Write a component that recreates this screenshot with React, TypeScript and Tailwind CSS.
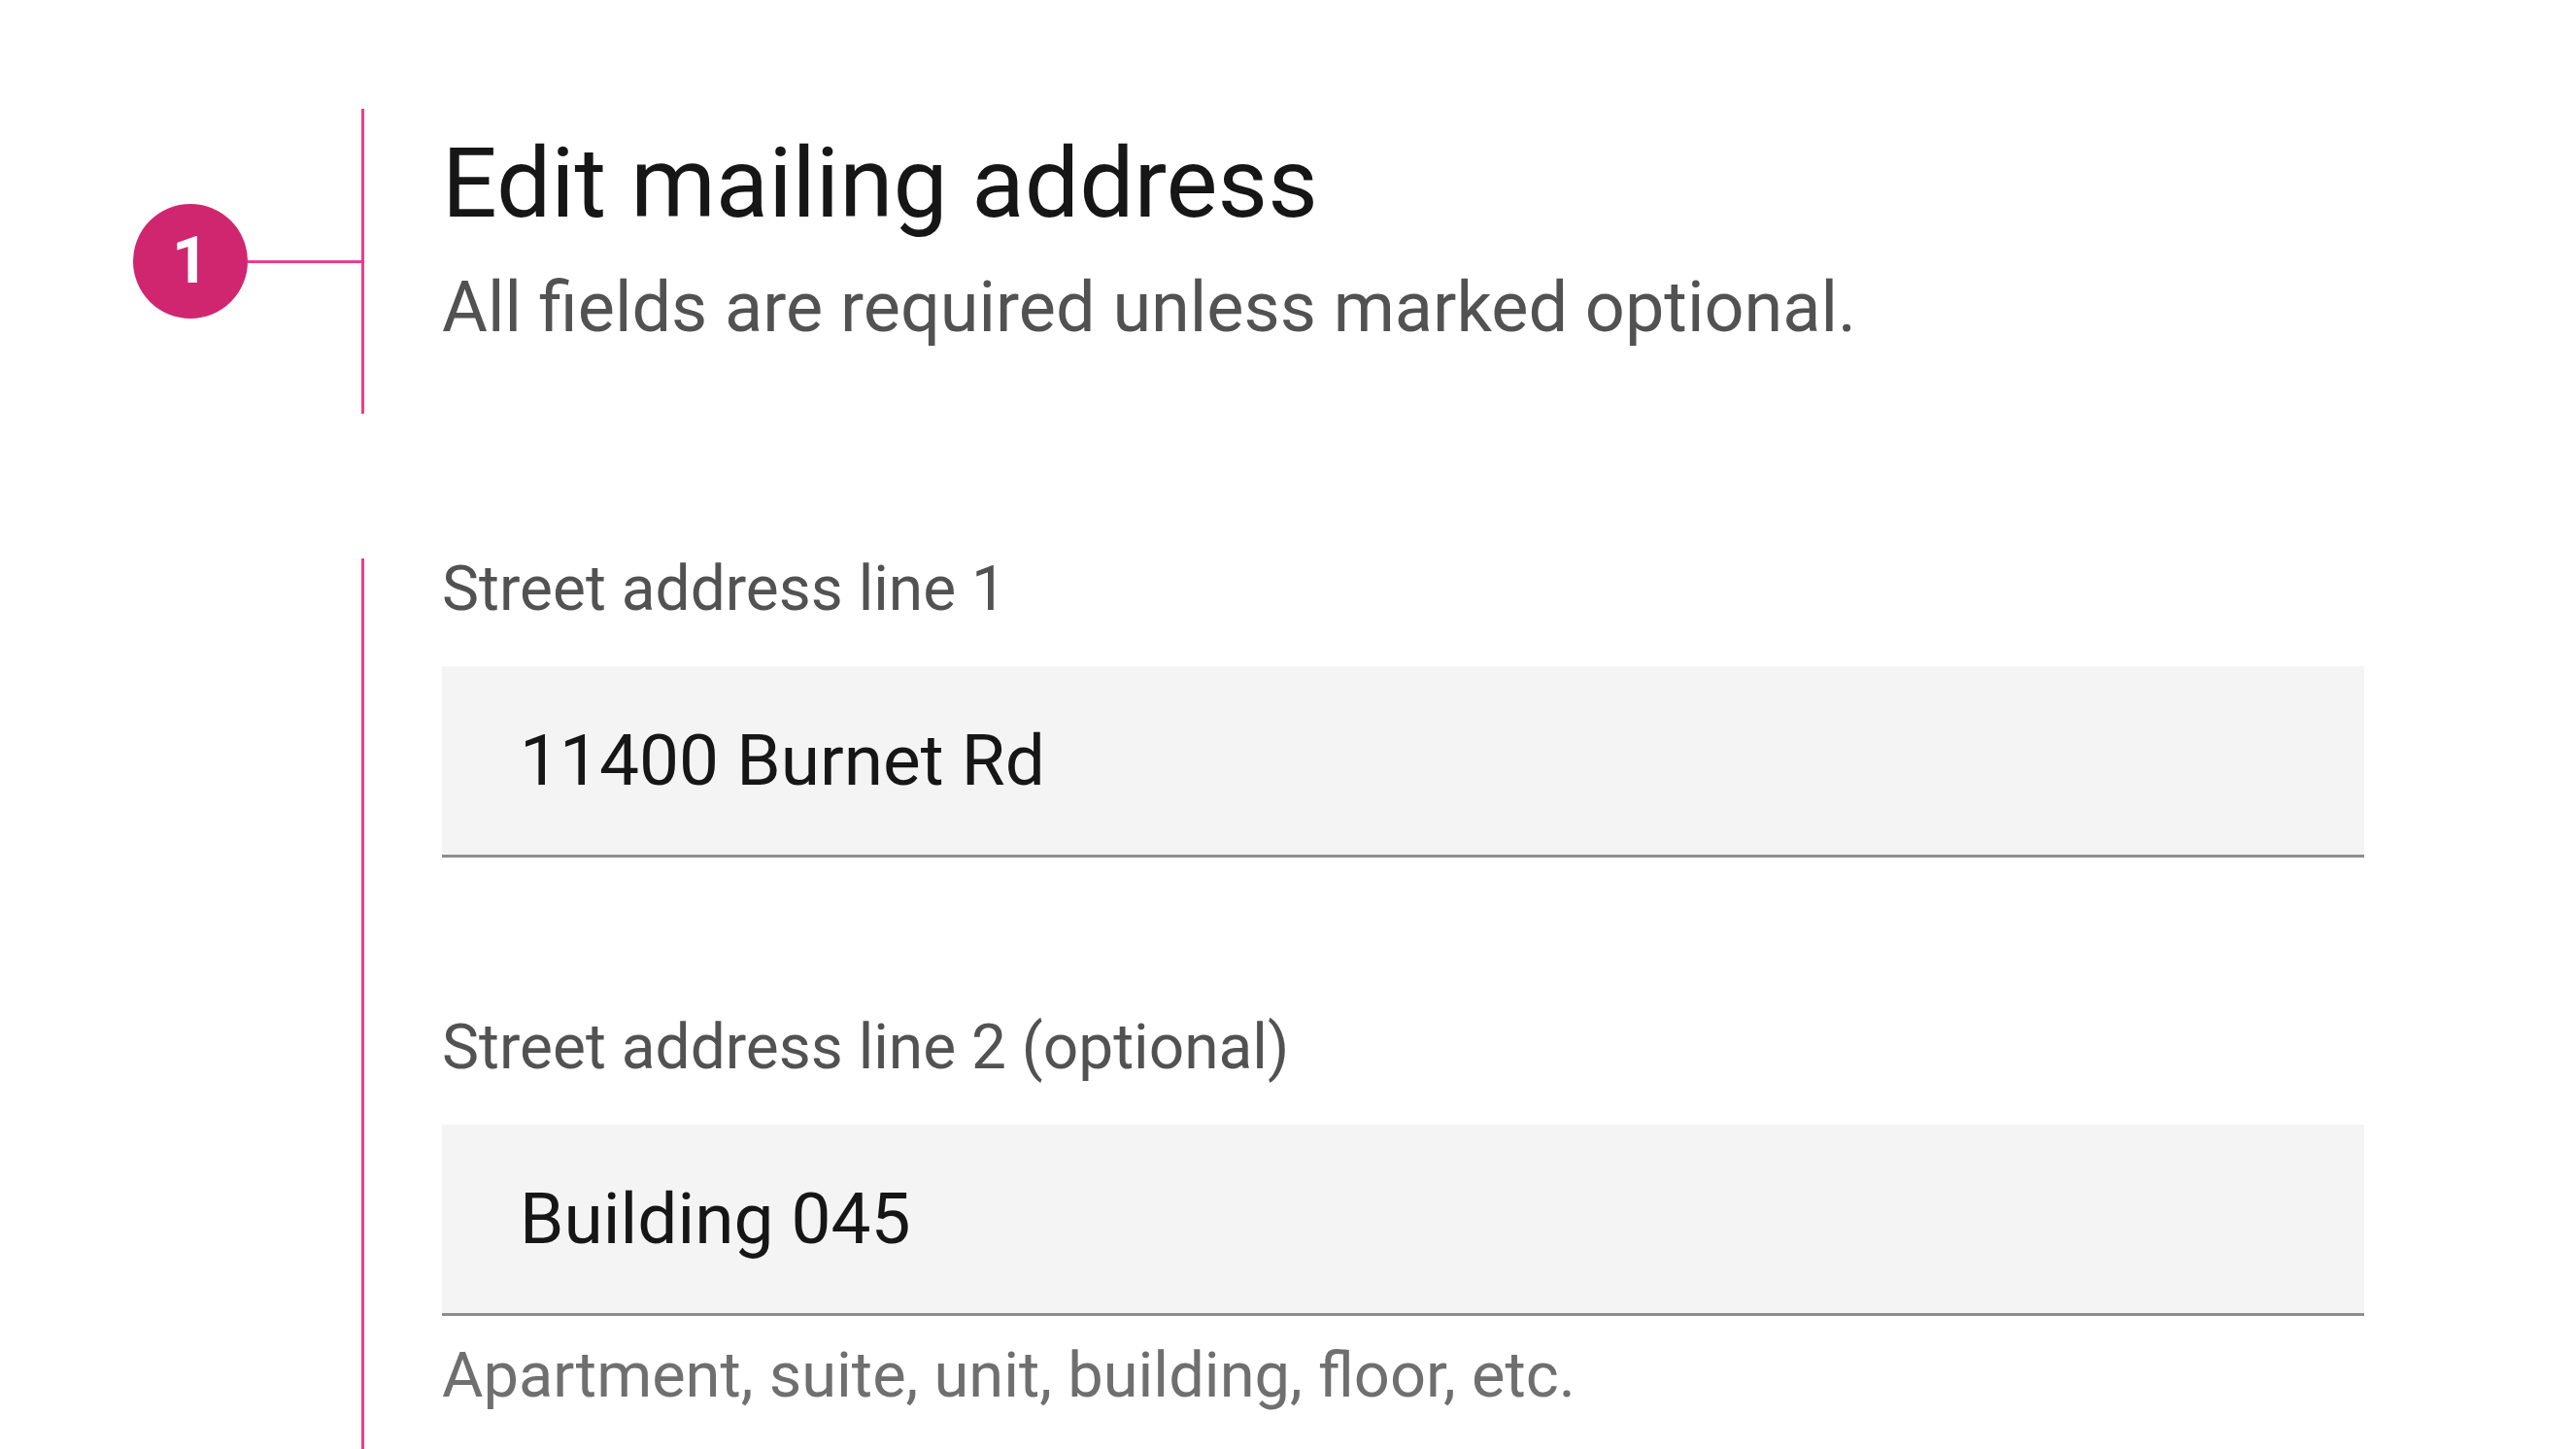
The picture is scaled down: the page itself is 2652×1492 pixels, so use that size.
import React from 'react';

const font = { fontFamily: 'Roboto, "Noto Sans", sans-serif' };

function Field({
  label,
  value,
  helper,
}: {
  label: string;
  value: string;
  helper?: string;
}) {
  return (
    <div className="flex flex-col">
      <label className="text-[64px] leading-none text-[#525252]">{label}</label>
      <div className="mt-[47px] flex h-[197px] w-[1979px] items-center border-b-[3px] border-[#8d8d8d] bg-[#f4f4f4] pl-[80px]">
        <span className="text-[73px] leading-none text-[#161616]">{value}</span>
      </div>
      {helper && (
        <p className="mt-[29px] text-[65px] leading-none text-[#6f6f6f]">{helper}</p>
      )}
    </div>
  );
}

export default function App() {
  return (
    <div className="min-h-screen w-full overflow-hidden bg-white" style={font}>
      {/* Header section with annotation */}
      <div className="flex items-stretch pt-[112px]">
        <div className="flex w-[372px] items-center pl-[137px]">
          <div className="flex h-[118px] w-[118px] shrink-0 items-center justify-center rounded-full bg-[#d02670] text-[66px] font-bold leading-none text-white">
            1
          </div>
          <div className="h-[3px] flex-1 bg-[#ea3e8c]" />
        </div>
        <div className="h-[314px] border-l-[3px] border-[#ea3e8c] pl-[80px] pt-[27px]">
          <h1 className="text-[100px] font-normal leading-none text-[#161616]">
            Edit mailing address
          </h1>
          <p className="mt-[42px] text-[72px] leading-none text-[#525252]">
            All fields are required unless marked optional.
          </p>
        </div>
      </div>

      {/* Form section */}
      <div className="mt-[149px] flex">
        <div className="w-[372px] shrink-0" />
        <div className="flex h-[1000px] flex-col gap-[164px] border-l-[3px] border-[#ea3e8c] pl-[80px]">
          <Field label="Street address line 1" value="11400 Burnet Rd" />
          <Field
            label="Street address line 2 (optional)"
            value="Building 045"
            helper="Apartment, suite, unit, building, floor, etc."
          />
        </div>
      </div>
    </div>
  );
}
